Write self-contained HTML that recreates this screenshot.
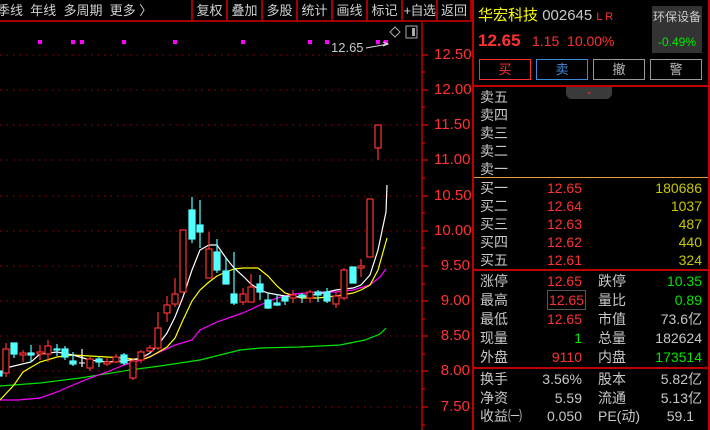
<!DOCTYPE html>
<html><head><meta charset="utf-8"><style>
*{margin:0;padding:0;box-sizing:border-box}
body{width:710px;height:430px;background:#000;overflow:hidden;position:relative;font-family:"Liberation Sans","Noto Sans CJK SC",sans-serif;color:#c8c8c8}
.t{position:absolute;white-space:nowrap;font-size:13px;line-height:16px}
.btn{position:absolute;top:0;height:20px;border-right:2px solid #a00000;font-size:13px;line-height:22px;text-align:center;color:#d0d0d0;white-space:nowrap;overflow:hidden}
.row{position:absolute;left:480px;width:222px;height:18px;font-size:14px;line-height:18px}
.row span{position:absolute;white-space:nowrap}
.l1{left:0;color:#c8c8c8}.v1{right:120px;text-align:right}.l2{left:118px;color:#c8c8c8}.v2{right:0;text-align:right}
.r{color:#ff3232}.g{color:#00e600}.y{color:#c8c800}.w{color:#c8c8c8}
.ax{position:absolute;left:434px;width:36px;text-align:right;color:#ff3232;font-size:15px;line-height:16px}
</style></head><body>
<div class="t" style="left:-3px;top:3px;color:#d0d0d0">季线&nbsp;&nbsp;年线&nbsp;&nbsp;多周期&nbsp;&nbsp;更多 〉</div>
<div style="position:absolute;left:0;top:20px;width:472px;height:2px;background:#a00000"></div>
<div style="position:absolute;left:191px;top:0;width:2px;height:20px;background:#a00000"></div>
<div class="btn" style="left:193px;width:35px">复权</div>
<div class="btn" style="left:228px;width:35px">叠加</div>
<div class="btn" style="left:263px;width:35px">多股</div>
<div class="btn" style="left:298px;width:35px">统计</div>
<div class="btn" style="left:333px;width:35px">画线</div>
<div class="btn" style="left:368px;width:35px">标记</div>
<div class="btn" style="left:403px;width:35px;letter-spacing:-0.5px">+自选</div>
<div class="btn" style="left:438px;width:34px">返回</div>
<svg style="position:absolute;left:0;top:0" width="472" height="430">
<g stroke="#a00000" stroke-dasharray="1.5,5" stroke-width="1">
<line x1="0" y1="55" x2="420" y2="55"/><line x1="0" y1="90" x2="420" y2="90"/><line x1="0" y1="125" x2="420" y2="125"/><line x1="0" y1="160" x2="420" y2="160"/><line x1="0" y1="196" x2="420" y2="196"/><line x1="0" y1="231" x2="420" y2="231"/><line x1="0" y1="266" x2="420" y2="266"/><line x1="0" y1="301" x2="420" y2="301"/><line x1="0" y1="336" x2="420" y2="336"/><line x1="0" y1="371" x2="420" y2="371"/><line x1="0" y1="407" x2="420" y2="407"/>
</g>
<line x1="422" y1="22" x2="422" y2="430" stroke="#c00000" stroke-width="1.5"/>
<g stroke="#c00000" stroke-width="1.5">
<line x1="422" y1="55" x2="428" y2="55"/><line x1="422" y1="90" x2="428" y2="90"/><line x1="422" y1="125" x2="428" y2="125"/><line x1="422" y1="160" x2="428" y2="160"/><line x1="422" y1="196" x2="428" y2="196"/><line x1="422" y1="231" x2="428" y2="231"/><line x1="422" y1="266" x2="428" y2="266"/><line x1="422" y1="301" x2="428" y2="301"/><line x1="422" y1="336" x2="428" y2="336"/><line x1="422" y1="371" x2="428" y2="371"/><line x1="422" y1="407" x2="428" y2="407"/>
<line x1="422" y1="72" x2="425" y2="72"/><line x1="422" y1="107" x2="425" y2="107"/><line x1="422" y1="143" x2="425" y2="143"/><line x1="422" y1="178" x2="425" y2="178"/><line x1="422" y1="213" x2="425" y2="213"/><line x1="422" y1="248" x2="425" y2="248"/><line x1="422" y1="284" x2="425" y2="284"/><line x1="422" y1="319" x2="425" y2="319"/><line x1="422" y1="354" x2="425" y2="354"/><line x1="422" y1="389" x2="425" y2="389"/><line x1="422" y1="425" x2="425" y2="425"/>
</g>
<g fill="#ff00ff"><rect x="38" y="40" width="4" height="4"/><rect x="71" y="40" width="4" height="4"/><rect x="80" y="40" width="4" height="4"/><rect x="122" y="40" width="4" height="4"/><rect x="173" y="40" width="4" height="4"/><rect x="241" y="40" width="4" height="4"/><rect x="308" y="40" width="4" height="4"/><rect x="325" y="40" width="4" height="4"/><rect x="376" y="40" width="4" height="4"/><rect x="384" y="40" width="4" height="4"/></g>
<path d="M366 48 L388 44 M383 42 L388 44 L383 46" stroke="#ddd" fill="none" stroke-width="1"/>
<path d="M395 27 L400 32 L395 37 L390 32Z" stroke="#aaa" fill="none"/>
<rect x="406" y="26" width="11" height="12" stroke="#aaa" fill="none"/><rect x="412" y="28" width="3" height="8" fill="#aaa"/>
<polyline fill="none" stroke="#00e600" stroke-width="1.2" points="0,386 40,383 80,378 130,370 160,366 200,360 240,350 260,348 300,347 340,345 365,340 380,334 386,328"/>
<polyline fill="none" stroke="#ff00ff" stroke-width="1.2" points="0,400 18,400 40,398 57,392 73,385 90,378 107,372 124,365 141,360 158,353 175,345 192,340 200,330 217,322 234,316 243,313 260,305 277,298 293,294 318,292 336,292 353,290 370,285 380,277 386,269"/>
<polyline fill="none" stroke="#ffff00" stroke-width="1.2" points="0,400 14,385 23,372 40,362 57,357 73,355 90,356 107,357 124,358 141,360 150,357 167,347 175,338 183,320 192,301 200,290 209,282 217,276 226,272 234,269 243,268 258,268 268,276 277,286 285,293 301,298 318,298 336,296 353,293 361,290 370,285 378,270 387,238"/>
<polyline fill="none" stroke="#ffffff" stroke-width="1.2" points="0,373 6,368 14,366 31,362 40,354 57,352 73,355 90,360 107,362 124,361 141,358 150,353 158,345 167,333 175,317 183,297 192,270 200,250 209,245 217,245 226,258 234,268 243,276 251,284 260,290 268,293 285,296 301,297 318,294 336,290 353,288 361,285 370,275 378,250 386,212 387,185"/>
<g stroke="#ff3232" fill="#000" stroke-width="1.2">
<line x1="6" y1="343" x2="6" y2="377"/><rect x="3" y="349" width="6" height="24"/>
<line x1="23" y1="350" x2="23" y2="362"/><rect x="20" y="353" width="6" height="2"/>
<line x1="40" y1="345" x2="40" y2="360"/><rect x="37" y="352" width="6" height="2"/>
<line x1="48" y1="340" x2="48" y2="362"/><rect x="45" y="346" width="6" height="8"/>
<line x1="90" y1="357" x2="90" y2="371"/><rect x="87" y="359" width="6" height="9"/>
<line x1="107" y1="358" x2="107" y2="366"/><rect x="104" y="362" width="6" height="2"/>
<line x1="116" y1="354" x2="116" y2="363"/><rect x="113" y="357" width="6" height="5"/>
<line x1="133" y1="358" x2="133" y2="380"/><rect x="130" y="361" width="6" height="17"/>
<line x1="141" y1="350" x2="141" y2="363"/><rect x="138" y="352" width="6" height="8"/>
<line x1="150" y1="345" x2="150" y2="352"/><rect x="147" y="348" width="6" height="3"/>
<line x1="158" y1="312" x2="158" y2="350"/><rect x="155" y="328" width="6" height="20"/>
<line x1="167" y1="296" x2="167" y2="322"/><rect x="164" y="305" width="6" height="8"/>
<line x1="175" y1="278" x2="175" y2="307"/><rect x="172" y="294" width="6" height="10"/>
<rect x="180" y="230" width="6" height="62"/>
<line x1="209" y1="232" x2="209" y2="278"/><rect x="206" y="249" width="6" height="29"/>
<line x1="243" y1="288" x2="243" y2="305"/><rect x="240" y="294" width="6" height="8"/>
<line x1="251" y1="274" x2="251" y2="302"/><rect x="248" y="287" width="6" height="15"/>
<line x1="293" y1="290" x2="293" y2="303"/><rect x="290" y="295" width="6" height="3"/>
<line x1="310" y1="290" x2="310" y2="303"/><rect x="307" y="292" width="6" height="6"/>
<line x1="336" y1="292" x2="336" y2="308"/><rect x="333" y="296" width="6" height="8"/>
<line x1="344" y1="268" x2="344" y2="300"/><rect x="341" y="270" width="6" height="28"/>
<line x1="361" y1="259" x2="361" y2="277"/><rect x="358" y="266" width="6" height="2"/>
<rect x="367" y="199" width="6" height="58"/>
<line x1="378" y1="148" x2="378" y2="160"/><rect x="375" y="125" width="6" height="23"/>
</g>
<g stroke="#54ffff" fill="#54ffff" stroke-width="1.2">
<rect x="-2" y="371" width="4" height="5"/>
<line x1="14" y1="343" x2="14" y2="358"/><rect x="11" y="343" width="6" height="11"/>
<line x1="31" y1="345" x2="31" y2="362"/><rect x="28" y="353" width="6" height="2"/>
<line x1="57" y1="344" x2="57" y2="356"/><rect x="54" y="349" width="6" height="1"/>
<line x1="65" y1="346" x2="65" y2="360"/><rect x="62" y="349" width="6" height="8"/>
<line x1="73" y1="352" x2="73" y2="366"/><rect x="70" y="361" width="6" height="3"/>
<line x1="99" y1="356" x2="99" y2="367"/><rect x="96" y="359" width="6" height="3"/>
<line x1="124" y1="353" x2="124" y2="365"/><rect x="121" y="355" width="6" height="8"/>
<line x1="192" y1="197" x2="192" y2="243"/><rect x="189" y="210" width="6" height="29"/>
<line x1="200" y1="200" x2="200" y2="248"/><rect x="197" y="225" width="6" height="7"/>
<line x1="217" y1="239" x2="217" y2="273"/><rect x="214" y="252" width="6" height="18"/>
<line x1="226" y1="257" x2="226" y2="284"/><rect x="223" y="271" width="6" height="13"/>
<line x1="234" y1="252" x2="234" y2="305"/><rect x="231" y="294" width="6" height="9"/>
<line x1="260" y1="275" x2="260" y2="300"/><rect x="257" y="284" width="6" height="8"/>
<line x1="268" y1="293" x2="268" y2="309"/><rect x="265" y="300" width="6" height="8"/>
<line x1="277" y1="294" x2="277" y2="306"/><rect x="274" y="303" width="6" height="2"/>
<line x1="285" y1="296" x2="285" y2="305"/><rect x="282" y="297" width="6" height="4"/>
<line x1="302" y1="293" x2="302" y2="303"/><rect x="299" y="295" width="6" height="2"/>
<line x1="318" y1="290" x2="318" y2="302"/><rect x="315" y="292" width="6" height="3"/>
<line x1="327" y1="288" x2="327" y2="303"/><rect x="324" y="292" width="6" height="9"/>
<rect x="350" y="267" width="6" height="16"/>
</g>
<line x1="82" y1="349" x2="82" y2="367" stroke="#fff" stroke-width="1.2"/><line x1="79" y1="363" x2="85" y2="363" stroke="#fff"/>
<text x="331" y="52" fill="#c8c8c8" font-size="13" font-family="Liberation Sans">12.65</text>
</svg>
<div class="ax" style="top:47px">12.50</div><div class="ax" style="top:82px">12.00</div><div class="ax" style="top:117px">11.50</div><div class="ax" style="top:152px">11.00</div><div class="ax" style="top:188px">10.50</div><div class="ax" style="top:223px">10.00</div><div class="ax" style="top:258px">9.50</div><div class="ax" style="top:293px">9.00</div><div class="ax" style="top:328px">8.50</div><div class="ax" style="top:363px">8.00</div><div class="ax" style="top:399px">7.50</div>
<div style="position:absolute;left:472px;top:0;width:2px;height:430px;background:#c00000"></div>
<div style="position:absolute;left:708px;top:0;width:2px;height:430px;background:#c00000"></div>
<div class="t" style="left:478px;top:7px;font-size:15px;line-height:18px"><span style="color:#ffff00">华宏科技</span> <span style="color:#c8c8c8">002645</span> <span style="color:#ff3232;font-size:11px">L R</span></div>
<div style="position:absolute;left:652px;top:6px;width:50px;height:47px;background:#333"></div>
<div class="t" style="left:652px;top:9px;width:50px;text-align:center;font-size:12px;color:#c8c8c8">环保设备</div>
<div class="t" style="left:652px;top:34px;width:50px;text-align:center;font-size:12px;color:#00e600">-0.49%</div>
<div class="t" style="left:478px;top:31px;font-size:17px;line-height:20px;color:#ff3232"><b>12.65</b></div>
<div class="t" style="left:532px;top:32px;font-size:14px;line-height:18px;color:#ff3232">1.15&nbsp;&nbsp;10.00%</div>
<div style="position:absolute;left:479px;top:59px;width:52px;height:21px;border:1px solid #ff3232;color:#ff3232;text-align:center;font-size:13px;line-height:19px">买</div>
<div style="position:absolute;left:536px;top:59px;width:52px;height:21px;border:1px solid #3c8cdc;color:#3c8cdc;text-align:center;font-size:13px;line-height:19px">卖</div>
<div style="position:absolute;left:593px;top:59px;width:52px;height:21px;border:1px solid #999;color:#bbb;text-align:center;font-size:13px;line-height:19px">撤</div>
<div style="position:absolute;left:650px;top:59px;width:52px;height:21px;border:1px solid #999;color:#bbb;text-align:center;font-size:13px;line-height:19px">警</div>
<div style="position:absolute;left:472px;top:85px;width:238px;height:2px;background:#c00000"></div>
<div style="position:absolute;left:566px;top:87px;width:46px;height:12px;background:#3a3a3a;border-radius:0 0 6px 6px;color:#ff3232;font-size:9px;line-height:9px;text-align:center">⌄</div>
<div class="row" style="top:88px"><span class="l1">卖五</span></div>
<div class="row" style="top:106px"><span class="l1">卖四</span></div>
<div class="row" style="top:124px"><span class="l1">卖三</span></div>
<div class="row" style="top:142px"><span class="l1">卖二</span></div>
<div class="row" style="top:160px"><span class="l1">卖一</span></div>
<div style="position:absolute;left:474px;top:177px;width:234px;height:1px;background:#e0a040"></div>
<div class="row" style="top:179px"><span class="l1">买一</span><span class="v1 r">12.65</span><span class="v2 y">180686</span></div>
<div class="row" style="top:197px"><span class="l1">买二</span><span class="v1 r">12.64</span><span class="v2 y">1037</span></div>
<div class="row" style="top:215px"><span class="l1">买三</span><span class="v1 r">12.63</span><span class="v2 y">487</span></div>
<div class="row" style="top:233px"><span class="l1">买四</span><span class="v1 r">12.62</span><span class="v2 y">440</span></div>
<div class="row" style="top:251px"><span class="l1">买五</span><span class="v1 r">12.61</span><span class="v2 y">324</span></div>
<div style="position:absolute;left:472px;top:269px;width:238px;height:2px;background:#c00000"></div>
<div class="row" style="top:272px"><span class="l1">涨停</span><span class="v1 r">12.65</span><span class="l2">跌停</span><span class="v2 g">10.35</span></div>
<div class="row" style="top:291px"><span class="l1">最高</span><span class="v1 r" style="outline:1px solid #555;right:117px;padding:0 1px">12.65</span><span class="l2">量比</span><span class="v2 g">0.89</span></div>
<div class="row" style="top:310px"><span class="l1">最低</span><span class="v1 r">12.65</span><span class="l2">市值</span><span class="v2 w">73.6亿</span></div>
<div class="row" style="top:329px"><span class="l1">现量</span><span class="v1 g">1</span><span class="l2">总量</span><span class="v2 w">182624</span></div>
<div class="row" style="top:348px"><span class="l1">外盘</span><span class="v1 r">9110</span><span class="l2">内盘</span><span class="v2 g">173514</span></div>
<div style="position:absolute;left:472px;top:367px;width:238px;height:2px;background:#c00000"></div>
<div class="row" style="top:370px"><span class="l1">换手</span><span class="v1 w">3.56%</span><span class="l2">股本</span><span class="v2 w">5.82亿</span></div>
<div class="row" style="top:389px"><span class="l1">净资</span><span class="v1 w">5.59</span><span class="l2">流通</span><span class="v2 w">5.13亿</span></div>
<div class="row" style="top:407px"><span class="l1">收益㈠</span><span class="v1 w">0.050</span><span class="l2">PE(动)</span><span class="v2 w" style="right:8px">59.1</span></div>
</body></html>
